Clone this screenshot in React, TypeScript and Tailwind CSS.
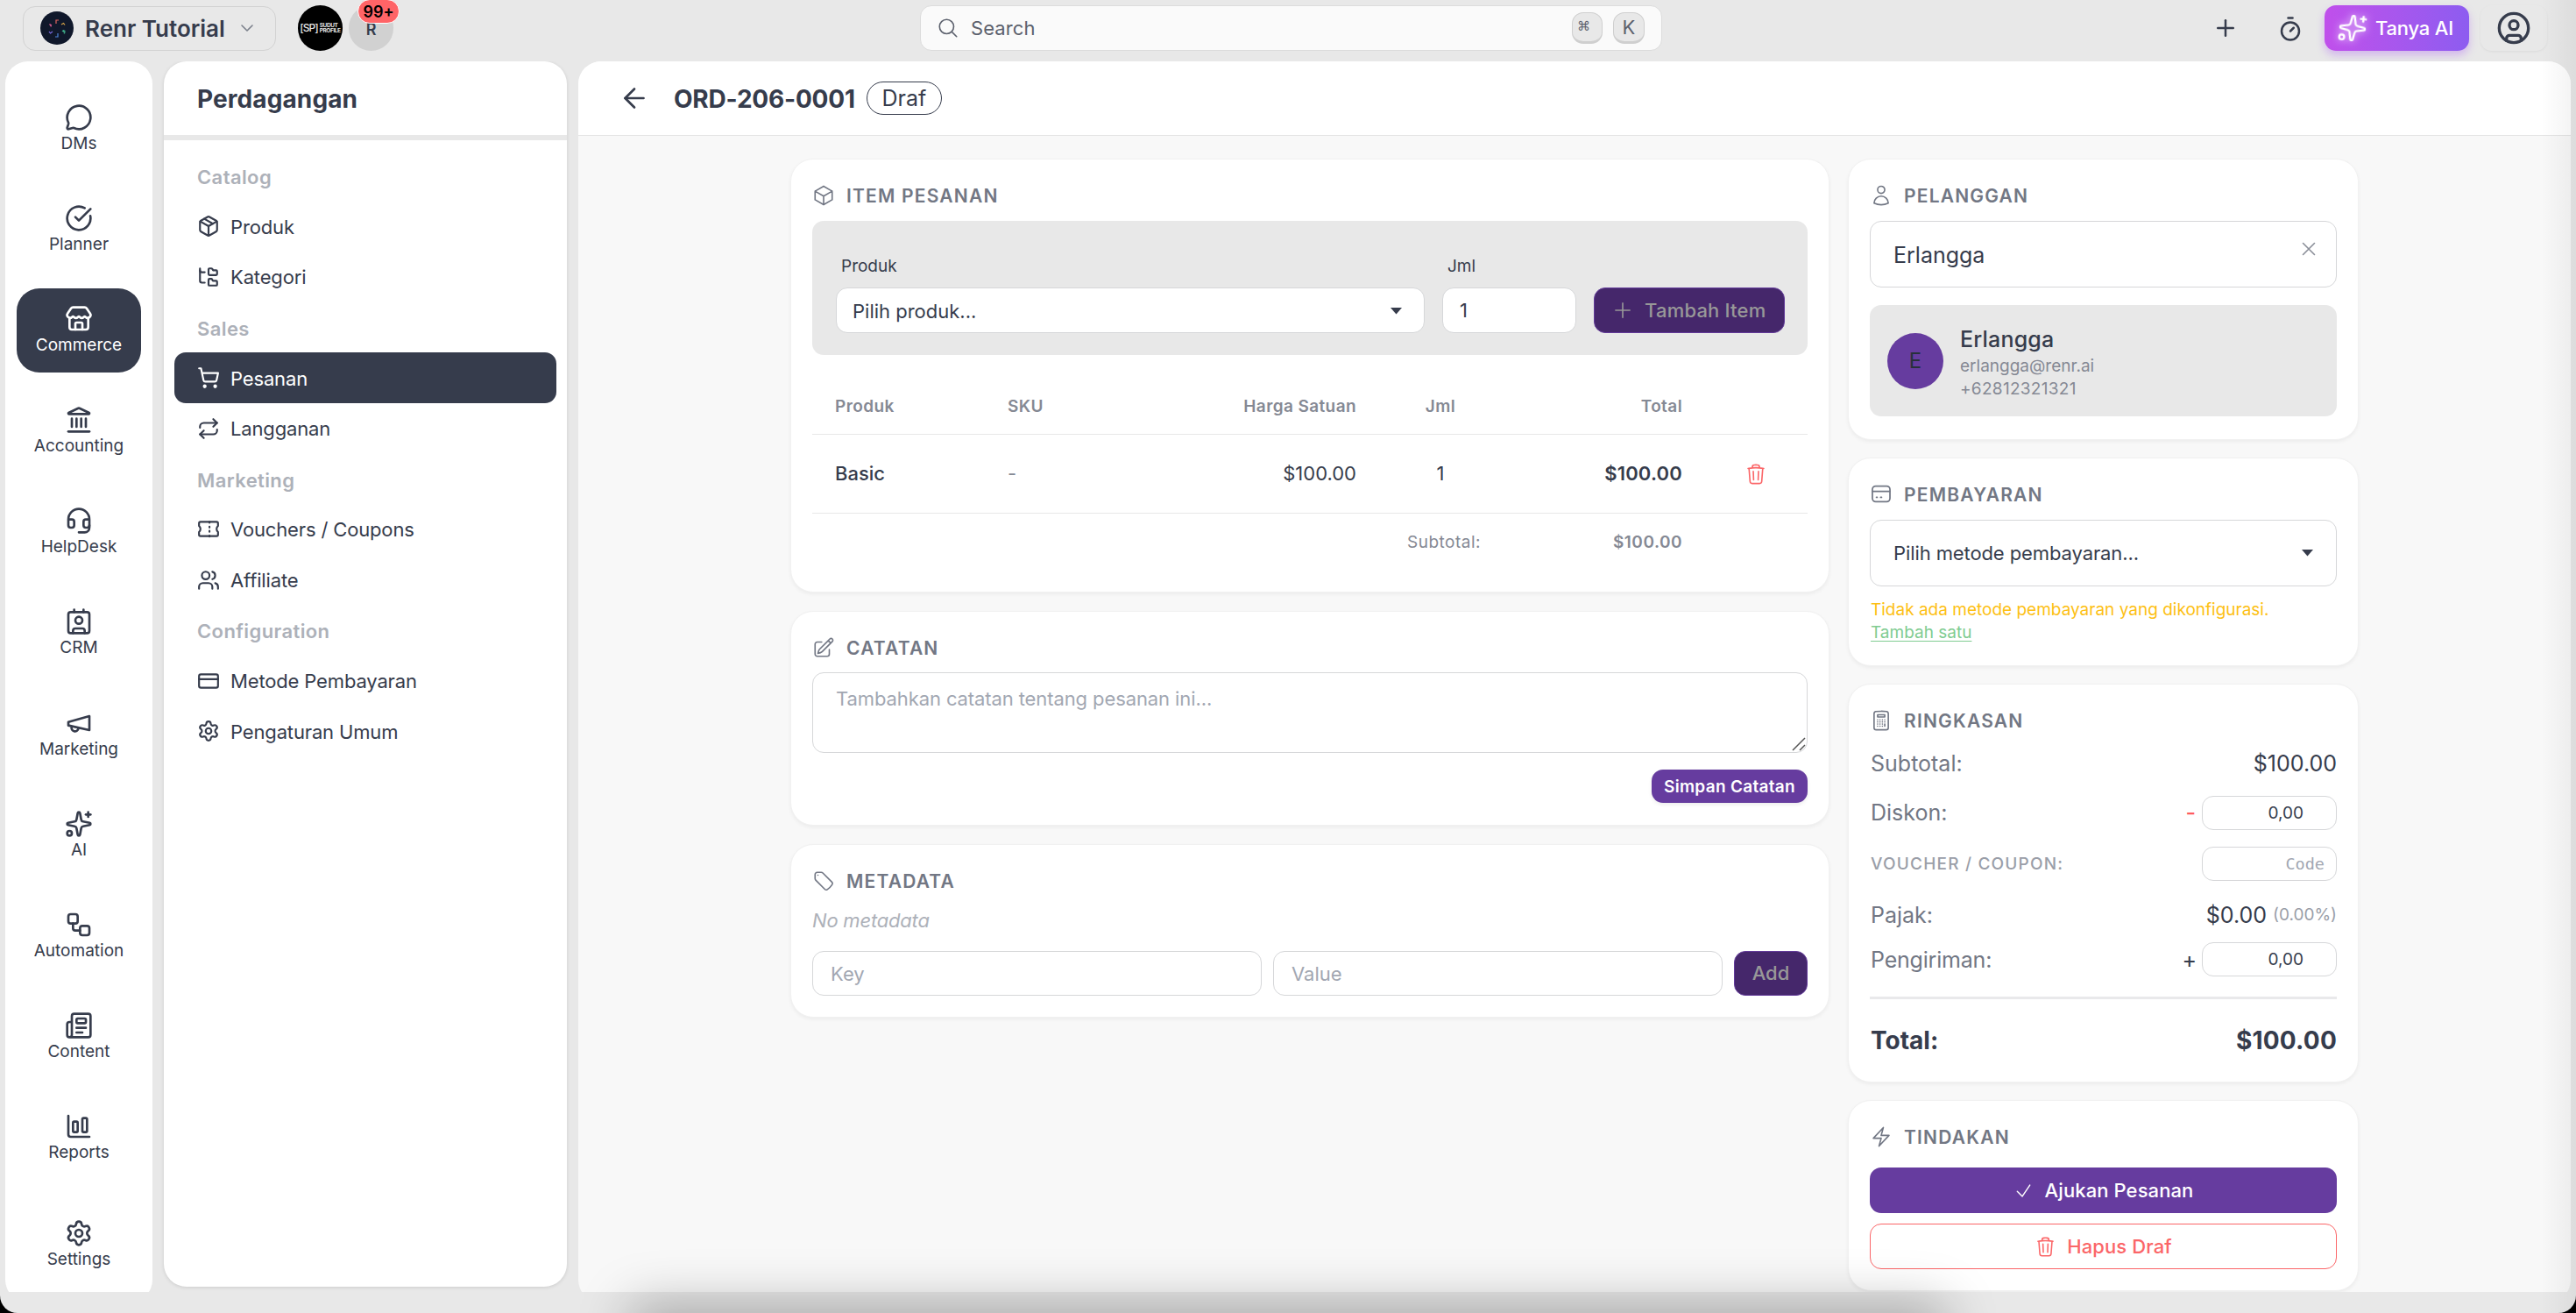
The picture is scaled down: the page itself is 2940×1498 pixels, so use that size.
import React from 'react';
import {
  ArrowLeft,
  ChartColumnBig,
  ChevronDown,
  CircleCheckBig,
  CircleUser,
  Contact,
  CreditCard,
  FolderTree,
  Headset,
  Landmark,
  MessageCircle,
  Newspaper,
  Package,
  Plus,
  Repeat,
  Settings,
  ShoppingCart,
  Sparkles,
  Store,
  Timer,
  Users,
  Workflow,
} from 'lucide-react';
import {
  HiOutlineBolt,
  HiOutlineCalculator,
  HiOutlineCheck,
  HiOutlineCube,
  HiOutlineMagnifyingGlass,
  HiOutlinePencilSquare,
  HiOutlinePlus,
  HiOutlineTag,
  HiOutlineTrash,
  HiOutlineUser,
  HiOutlineXMark,
} from 'react-icons/hi2';

type IconType = React.ComponentType<{ size?: number; className?: string }>;

const MegaphoneIcon: IconType = ({ size = 24, className }) => (
  <svg
    width={size}
    height={size}
    viewBox="0 0 24 24"
    fill="none"
    stroke="currentColor"
    strokeWidth="2"
    strokeLinecap="round"
    strokeLinejoin="round"
    className={className}
  >
    <path d="m3 11 18-5v12L3 14v-3z" />
    <path d="M11.6 16.8a3 3 0 1 1-5.8-1.6" />
  </svg>
);

const VoucherIcon: IconType = ({ size = 24, className }) => (
  <svg
    width={size}
    height={size}
    viewBox="0 0 24 24"
    fill="none"
    stroke="currentColor"
    strokeWidth="2"
    strokeLinecap="round"
    strokeLinejoin="round"
    className={className}
  >
    <path d="M3.500 4h17A1.500 1.500 0 0 1 22 5.500v2.800c-2 1.900-2 4.500 0 6.400v2.800a1.500 1.500 0 0 1-1.500 1.500h-17A1.500 1.500 0 0 1 2 17.500v-2.800c2-1.900 2-4.500 0-6.400V5.500A1.500 1.500 0 0 1 3.500 4z" />
    <path d="M13 4v1M13 9v1M13 13.500v1M13 18.500v1" />
  </svg>
);

const PaymentIcon: IconType = ({ size = 24, className }) => (
  <svg
    width={size}
    height={size}
    viewBox="0 0 24 24"
    fill="none"
    stroke="currentColor"
    strokeWidth="1.6"
    strokeLinecap="round"
    strokeLinejoin="round"
    className={className}
  >
    <rect x="2.75" y="3.25" width="18.5" height="16.5" rx="3.500" />
    <path d="M3 8.800h18M7 15.2h.8M11.4 15.2h1" />
  </svg>
);

const railItems: { label: string; icon: IconType }[] = [
  { label: 'DMs', icon: MessageCircle },
  { label: 'Planner', icon: CircleCheckBig },
  { label: 'Commerce', icon: Store },
  { label: 'Accounting', icon: Landmark },
  { label: 'HelpDesk', icon: Headset },
  { label: 'CRM', icon: Contact },
  { label: 'Marketing', icon: MegaphoneIcon },
  { label: 'AI', icon: Sparkles },
  { label: 'Automation', icon: Workflow },
  { label: 'Content', icon: Newspaper },
  { label: 'Reports', icon: ChartColumnBig },
  { label: 'Settings', icon: Settings },
];

const menuSections: { title: string; items: { label: string; icon: IconType }[] }[] = [
  {
    title: 'Catalog',
    items: [
      { label: 'Produk', icon: Package },
      { label: 'Kategori', icon: FolderTree },
    ],
  },
  {
    title: 'Sales',
    items: [
      { label: 'Pesanan', icon: ShoppingCart },
      { label: 'Langganan', icon: Repeat },
    ],
  },
  {
    title: 'Marketing',
    items: [
      { label: 'Vouchers / Coupons', icon: VoucherIcon },
      { label: 'Affiliate', icon: Users },
    ],
  },
  {
    title: 'Configuration',
    items: [
      { label: 'Metode Pembayaran', icon: CreditCard },
      { label: 'Pengaturan Umum', icon: Settings },
    ],
  },
];

const BrandLogo = () => (
  <svg width="38" height="38" viewBox="0 0 38 38" fill="none">
    <circle cx="19" cy="19" r="19" fill="#10182b" />
    <g strokeWidth="1.2">
      <path d="M18 14v-4h3" stroke="#e0655f" />
      <path d="M24 15l2.500-1.500 1.500 2" stroke="#d9a548" />
      <path d="M25 22l3 2-1 1.500M26 21.500l2.500 1" stroke="#3fae8a" />
      <path d="M20 25v4h-3" stroke="#4f86d9" />
      <path d="M14 23l-2.500 2-1.500-2" stroke="#7a6be0" />
      <path d="M13 16l-2.500-1.500M10.500 14.500l2 3" stroke="#d35a8c" />
    </g>
  </svg>
);

const TopBar = () => (
  <header className="flex h-[70px] shrink-0 pb-[6px]">
    <div className="flex w-[1050px] items-center pl-[26px]">
      <div className="flex h-[51px] w-[289px] items-center rounded-[14px] border border-[#d2d2d2] pl-[19px]">
        <BrandLogo />
        <span className="ml-[13px] text-[26px] font-semibold">Renr Tutorial</span>
        <ChevronDown size={24} strokeWidth={1.6} className="ml-[13px] text-[#7b808b]" />
      </div>
      <div className="ml-[25px] flex h-[52px] w-[51px] items-center justify-center rounded-full bg-black text-[#e4e4e4]">
        <span className="text-[12px] font-medium leading-none tracking-[-1px]">[SP]</span>
        <span className="ml-[2px] text-[6.500px] font-bold leading-[6px] tracking-[-0.4px]">
          SUDUT
          <br />
          PROFILE
        </span>
      </div>
      <div className="relative ml-[7px] flex h-[52px] w-[51px] items-center justify-center rounded-full bg-[#d1d1d1]">
        <span className="pt-[2px] text-[18px] font-semibold">R</span>
        <span className="absolute -top-[7px] left-[10px] flex h-[28px] w-[48px] items-center justify-center rounded-[14px] border border-white bg-[#ff6467] text-[18px] font-semibold text-black">
          99+
        </span>
      </div>
    </div>

    <div className="flex items-center">
      <div className="flex h-[52px] w-[847px] items-center rounded-[13px] border border-[#dcdcdc] bg-[#fafafa] pl-[18px] pr-[19px] text-[#5c616d]">
        <HiOutlineMagnifyingGlass size={26} />
        <span className="ml-[13px] flex-1 text-[22px] tracking-[0.1px]">Search</span>
        <kbd className="flex h-[36px] w-[35px] items-center rounded-[13px] border border-b-[3px] border-[#cfcfcf] bg-[#e8e8e8] pb-[2px] pl-[5px] font-['DejaVu_Sans'] text-[15px]">
          ⌘
        </kbd>
        <kbd className="ml-[12px] flex h-[36px] w-[36px] items-center justify-center rounded-[13px] border border-b-[3px] border-[#cfcfcf] bg-[#e8e8e8] font-['Inter'] text-[22px]">
          K
        </kbd>
      </div>
    </div>

    <div className="flex flex-1 items-center justify-end pr-[33px]">
      <Plus size={30} />
      <Timer size={30} className="ml-[44px] mt-[2px]" />
      <button className="ml-6 flex h-[52px] w-[165px] items-center rounded-[13px] bg-linear-to-r from-[#c04feb] to-[#8d5cf0] pl-[15px] text-white shadow-[0_5px_10px_rgba(168,85,247,0.35)]">
        <Sparkles size={34} strokeWidth={1.7} className="rotate-[6deg] drop-shadow-[0_0_5px_rgba(255,255,255,0.8)]" />
        <span className="ml-[9px] pt-px text-[22px] font-medium tracking-[-0.2px]">Tanya AI</span>
      </button>
      <div className="ml-[13px] flex h-[52px] w-[76px] items-center justify-center rounded-[13px] shadow-[0_1px_3px_rgba(0,0,0,0.06)]">
        <CircleUser size={40} />
      </div>
    </div>
  </header>
);

const Rail = () => (
  <nav className="flex h-[1416px] w-[168px] flex-col items-center gap-[19.1px] rounded-[26px] bg-white pt-[29px]">
    {railItems.map((item) => {
      const Icon = item.icon;
      const isActive = item.label === 'Commerce';
      return (
        <a
          key={item.label}
          className={`flex h-24 w-[142px] shrink-0 flex-col items-center rounded-[26px] pt-[19px] last:mt-[7px] ${
            isActive ? 'bg-[#363c4c] text-white' : ''
          }`}
        >
          <Icon size={32} />
          <span className="mt-[4px] text-[19px] leading-5">{item.label}</span>
        </a>
      );
    })}
  </nav>
);

const SideMenu = () => (
  <aside className="ml-[13px] h-[1398px] w-[460px] rounded-[26px] bg-white shadow-[0_1px_4px_rgba(0,0,0,0.12)]">
    <div className="flex h-[90px] items-center border-b-[6px] border-[#e8e8e8] pl-[38px] pt-[2px]">
      <h1 className="text-[28px] font-bold tracking-[0.1px]">Perdagangan</h1>
    </div>
    <div className="px-3 pt-3">
      {menuSections.map((section) => (
        <div key={section.title}>
          <h2 className="h-[57.600px] pl-[26px] pt-[2px] text-[22px] font-semibold leading-[57.600px] tracking-[0.4px] text-[#adb1b9]">
            {section.title}
          </h2>
          {section.items.map((item) => {
            const Icon = item.icon;
            const isActive = item.label === 'Pesanan';
            return (
              <a
                key={item.label}
                className={`flex h-[57.600px] items-center gap-[12px] rounded-[13px] pl-[26px] text-[22px] tracking-[-0.15px] ${
                  isActive ? 'bg-[#363c4c] text-white' : ''
                }`}
              >
                <Icon size={26} />
                <span className="pt-[2px]">{item.label}</span>
              </a>
            );
          })}
        </div>
      ))}
    </div>
  </aside>
);

const Card: React.FC<{ title: string; icon: IconType; className: string; children: React.ReactNode }> = ({
  title,
  icon: Icon,
  className,
  children,
}) => (
  <section
    className={`shrink-0 rounded-[26px] border border-[#f1f1f1] bg-white px-6 pt-[27px] shadow-[0_2px_4px_rgba(0,0,0,0.05)] ${className}`}
  >
    <h3 className="mb-[15px] flex h-7 items-center gap-[13px] text-[21px] font-semibold tracking-[1.2px] text-[#727784]">
      <Icon size={26} />
      <span className="pt-px">{title}</span>
    </h3>
    {children}
  </section>
);

const Caret = () => (
  <svg width="13" height="8" viewBox="0 0 13 8" fill="currentColor">
    <path d="M0 0h13L6.500 7.500z" />
  </svg>
);

const columns = 'grid grid-cols-[197px_150px_299px_142px_230px_118px] items-center';

const OrderItems = () => (
  <Card title="ITEM PESANAN" icon={HiOutlineCube} className="h-[495px]">
    <div className="flex h-[153px] gap-[20px] rounded-[13px] bg-[#e8e8e8] pl-[27px] pr-[26px] pt-[38px]">
      <div className="w-[672px] shrink-0">
        <label className="block h-[38px] pl-[6px] pt-px text-[19px] leading-[26px]">Produk</label>
        <div className="flex h-[52px] items-center justify-between rounded-[13px] border border-[#d6d7d9] bg-white pl-[18px] pr-[25px] pt-[2px] text-[22px]">
          Pilih produk...
          <Caret />
        </div>
      </div>
      <div className="w-[153px] shrink-0">
        <label className="block h-[38px] pl-[6px] pt-px text-[19px] leading-[26px]">Jml</label>
        <div className="flex h-[52px] items-center rounded-[13px] border border-[#d6d7d9] bg-white pl-[19px] text-[22px]">
          1
        </div>
      </div>
      <button className="mt-[38px] flex h-[52px] w-[218px] shrink-0 items-center gap-[12px] rounded-[13px] border border-[#623a99] bg-[#45276b] pl-[19px] text-[22px] font-medium tracking-[0.2px] text-[#989898]">
        <HiOutlinePlus size={26} />
        Tambah Item
      </button>
    </div>

    <div className={`${columns} mt-[26px] h-[65px] border-b border-[#e8e8e8] pt-[2px] text-[19px] font-semibold tracking-[0.4px] text-[#858994]`}>
      <span className="pl-[26px]">Produk</span>
      <span className="pl-[26px]">SKU</span>
      <span className="pr-[25px] text-right">Harga Satuan</span>
      <span className="text-center">Jml</span>
      <span className="pr-[25px] text-right">Total</span>
    </div>
    <div className={`${columns} h-[90px] border-b border-[#e8e8e8] text-[22px]`}>
      <span className="pl-[26px] font-medium">Basic</span>
      <span className="pl-[26px] text-[#858994]">-</span>
      <span className="pr-[25px] text-right">$100.00</span>
      <span className="text-center">1</span>
      <span className="pr-[25px] text-right font-semibold tracking-[0.2px]">$100.00</span>
      <span className="flex justify-center text-[#fb6668]">
        <HiOutlineTrash size={26} />
      </span>
    </div>
    <div className={`${columns} h-[65px] pt-px text-[19px] tracking-[0.5px] text-[#858994]`}>
      <span className="col-span-4 pr-[25px] text-right">Subtotal:</span>
      <span className="pr-[25px] text-right font-semibold">$100.00</span>
    </div>
  </Card>
);

const Notes = () => (
  <Card title="CATATAN" icon={HiOutlinePencilSquare} className="h-[245px]">
    <div className="relative -mt-px h-[92px] rounded-[13px] border border-[#d6d7d9] pl-[26px] pt-[13px] text-[22px] leading-[32px] tracking-[-0.1px] text-[#a2a7b2]">
      Tambahkan catatan tentang pesanan ini...
      <svg
        width="16"
        height="16"
        viewBox="0 0 16 16"
        fill="none"
        stroke="#555"
        strokeWidth="1.500"
        className="absolute bottom-[1px] right-[1px]"
      >
        <path d="M1 15 15 1M9 15l6-6" />
      </svg>
    </div>
    <div className="mt-[19px] flex justify-end">
      <button className="h-[38px] w-[178px] rounded-[13px] bg-[#663c9f] pt-[2px] text-[19px] font-semibold tracking-[0.3px] text-white shadow-[0_2px_4px_rgba(0,0,0,0.08)]">
        Simpan Catatan
      </button>
    </div>
  </Card>
);

const Metadata = () => (
  <Card title="METADATA" icon={HiOutlineTag} className="h-[198px]">
    <p className="h-[51px] text-[22px] italic leading-[32px] tracking-[-0.2px] text-[#adb1b9]">No metadata</p>
    <div className="flex h-[51px] gap-[13px] text-[22px]">
      <div className="flex flex-1 items-center rounded-[13px] border border-[#d6d7d9] pl-[20px] pt-px text-[#a2a7b2]">Key</div>
      <div className="flex flex-1 items-center rounded-[13px] border border-[#d6d7d9] pl-[20px] pt-px text-[#a2a7b2]">Value</div>
      <button className="w-[84px] rounded-[13px] border border-[#623a99] bg-[#45276b] font-medium text-[#989898]">
        Add
      </button>
    </div>
  </Card>
);

const Customer = () => (
  <Card title="PELANGGAN" icon={HiOutlineUser} className="h-[321px]">
    <div className="flex h-[76px] items-center justify-between rounded-[13px] border border-[#d6d7d9] pl-[26px] pr-[18px] text-[25px]">
      <span className="pt-1">Erlangga</span>
      <HiOutlineXMark size={26} className="-mt-[12px] text-[#8b8f99]" />
    </div>
    <div className="mt-[20px] flex h-[127px] items-center rounded-[13px] bg-[#e8e8e8] pl-[20px]">
      <div className="flex size-16 items-center justify-center rounded-full bg-[#663c9f] pt-px text-[24px] text-[#27303a]">E</div>
      <div className="ml-[19px] pt-[2px]">
        <p className="text-[25px] font-medium leading-[36px] tracking-[0.2px]">Erlangga</p>
        <p className="text-[19px] leading-[26px] text-[#858994]">erlangga@renr.ai</p>
        <p className="text-[19px] leading-[26px] tracking-[0.3px] text-[#858994]">+62812321321</p>
      </div>
    </div>
  </Card>
);

const Payment = () => (
  <Card title="PEMBAYARAN" icon={PaymentIcon} className="h-[238px]">
    <div className="flex h-[76px] items-center justify-between rounded-[13px] border border-[#d6d7d9] pl-[26px] pr-[26px] text-[22px] tracking-[-0.1px]">
      Pilih metode pembayaran...
      <Caret />
    </div>
    <p className="mt-[14px] pl-px text-[19px] leading-[26px] text-[#fdbf14]">
      Tidak ada metode pembayaran yang dikonfigurasi.
      <br />
      <a className="text-[#80cc91] underline underline-offset-[3px]">Tambah satu</a>
    </p>
  </Card>
);

const Summary = () => (
  <Card title="RINGKASAN" icon={HiOutlineCalculator} className="h-[455px]">
    <div className="flex h-10 items-center justify-between pt-[2px] text-[25px]">
      <span className="pl-px text-[#727784]">Subtotal:</span>
      <span>$100.00</span>
    </div>
    <div className="mt-[17px] flex h-[39px] items-center text-[25px]">
      <span className="flex-1 pl-px pt-px text-[#727784]">Diskon:</span>
      <span className="mr-[7px] font-medium text-[#ff5c60]">-</span>
      <div className="flex h-full w-[154px] items-center justify-end rounded-[13px] border border-[#d6d7d9] pr-[37px] pt-px text-[19px]">
        0,00
      </div>
    </div>
    <div className="mt-[19px] flex h-[39px] items-center justify-between">
      <span className="pl-px pt-px text-[19px] font-medium tracking-[1.200px] text-[#9a9ea8]">VOUCHER / COUPON:</span>
      <div className="flex h-full w-[154px] items-center justify-end rounded-[13px] border border-[#d6d7d9] pr-[13px] font-['DejaVu_Sans_Mono',monospace] text-[18.500px] text-[#a2a7b2]">
        Code
      </div>
    </div>
    <div className="mt-[19px] flex h-[39px] items-center text-[25px]">
      <span className="flex-1 pl-px pt-[2px] text-[#727784]">Pajak:</span>
      <span className="pt-[2px]">$0.00</span>
      <span className="ml-[7px] pt-[2px] text-[19px] text-[#9a9ea8]">(0.00%)</span>
    </div>
    <div className="mt-[12px] flex h-[39px] items-center text-[25px]">
      <span className="flex-1 pl-px pt-[2px] tracking-[-0.2px] text-[#727784]">Pengiriman:</span>
      <span className="mr-[6px] pt-[2px]">+</span>
      <div className="flex h-full w-[154px] items-center justify-end rounded-[13px] border border-[#d6d7d9] pr-[37px] pt-px text-[19px]">
        0,00
      </div>
    </div>
    <div className="mt-[23px] h-[3px] bg-[#e9e9eb]" />
    <div className="mt-[27px] flex h-10 items-center justify-between text-[28px] font-bold">
      <span className="pl-px">Total:</span>
      <span className="tracking-[0.2px]">$100.00</span>
    </div>
  </Card>
);

const Actions = () => (
  <Card title="TINDAKAN" icon={HiOutlineBolt} className="h-[218px]">
    <div className="flex flex-col gap-3 pt-[6px] text-[22px] font-medium tracking-[0.1px]">
      <button className="flex h-[52px] items-center justify-center gap-[13px] rounded-[13px] bg-[#663c9f] text-white">
        <HiOutlineCheck size={23} />
        Ajukan Pesanan
      </button>
      <button className="flex h-[52px] items-center justify-center gap-[12px] rounded-[13px] border border-[#fb6668] text-[#fb6668]">
        <HiOutlineTrash size={25} />
        Hapus Draf
      </button>
    </div>
  </Card>
);

const OrderPage = () => (
  <main className="ml-[13px] h-[1416px] w-[2274px] overflow-hidden rounded-[26px] bg-[#f8f8f8]">
    <div className="flex h-[85px] items-center border-b border-[#e4e4e4] bg-white pl-[46px]">
      <ArrowLeft size={36} strokeWidth={1.8} />
      <h1 className="ml-[27px] pt-[2px] text-[28px] font-bold tracking-[-0.2px]">ORD-206-0001</h1>
      <span className="ml-[13px] flex h-[38px] w-[86px] items-center justify-center rounded-full border-[1.500px] border-[#363c4c] pt-[2px] text-[25px]">
        Draf
      </span>
    </div>
    <div className="mx-auto flex w-[1790px] gap-[21px] pt-[26px]">
      <div className="flex w-[1186px] flex-col gap-[21px]">
        <OrderItems />
        <Notes />
        <Metadata />
      </div>
      <div className="flex w-[583px] flex-col gap-[20px]">
        <Customer />
        <Payment />
        <Summary />
        <Actions />
      </div>
    </div>
  </main>
);

export default function App() {
  return (
    <div className="h-[1498px] w-[2940px] overflow-hidden bg-black">
      <div className="relative flex h-full flex-col overflow-hidden rounded-b-[20px] bg-[#e8e8e8] font-['Inter',sans-serif] text-[#363c4c]">
        <TopBar />
        <div className="flex h-[1404px] overflow-hidden pl-[6px]">
          <Rail />
          <SideMenu />
          <OrderPage />
        </div>
        {/* soft shadows cast along the window edges */}
        <div className="pointer-events-none absolute -bottom-[40px] left-[740px] h-[30px] w-[1460px] shadow-[0_0_60px_20px_rgba(0,0,0,0.28)]" />
        <div className="pointer-events-none absolute right-0 top-0 h-full w-[40px] bg-linear-to-r from-transparent to-black/5" />
      </div>
    </div>
  );
}
